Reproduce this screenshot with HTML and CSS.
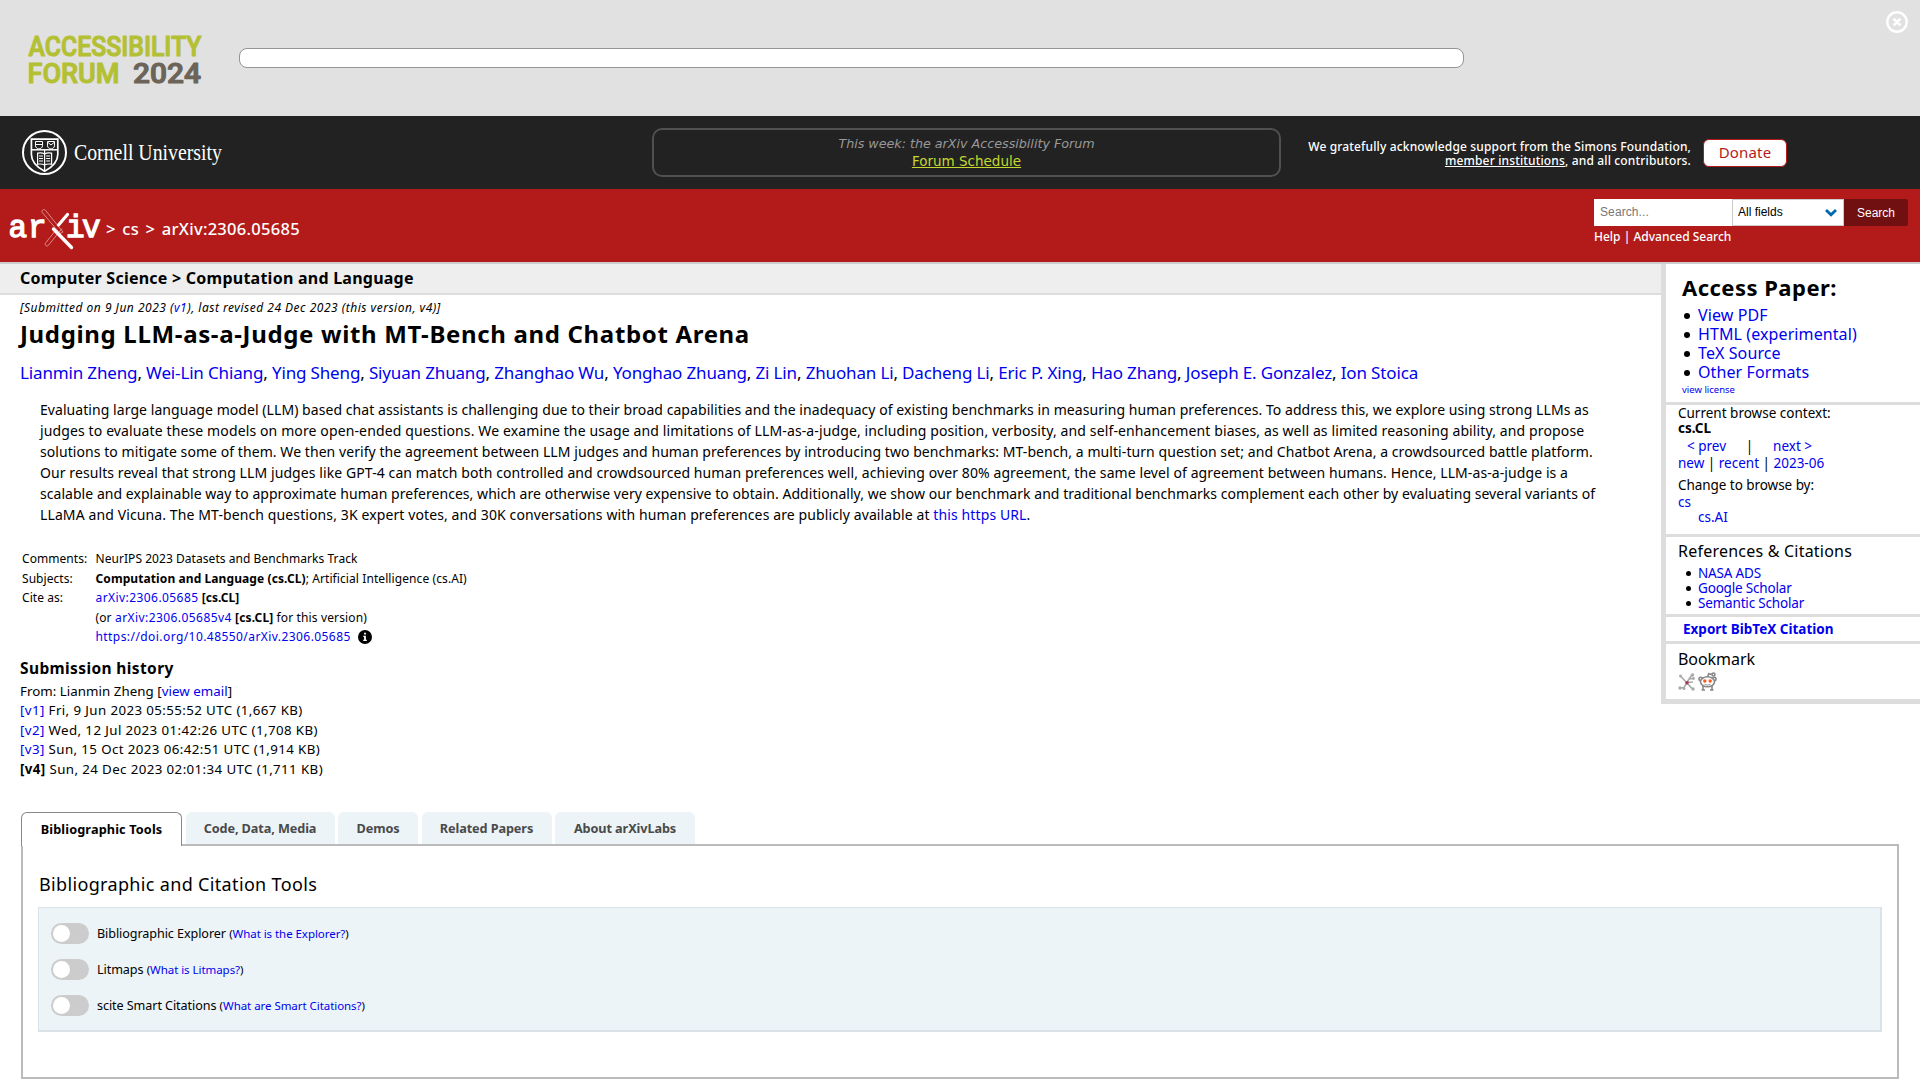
FILE: index.html
```html
<!DOCTYPE html>
<html lang="en">
<head>
<meta charset="utf-8">
<title>[2306.05685] Judging LLM-as-a-Judge with MT-Bench and Chatbot Arena</title>
<link rel="stylesheet" href="styles.css">
</head>
<body>
<div class="banner">
  <svg class="forum-logo" width="180" height="64" viewBox="0 0 180 64" role="img">
    <g class="forum-type">
      <text x="1.500" y="25.500" textLength="173" lengthAdjust="spacingAndGlyphs">ACCESSIBILITY</text>
      <text x="0.500" y="52.500" textLength="92" lengthAdjust="spacingAndGlyphs">FORUM</text>
      <text class="year" x="106" y="52.500" textLength="68" lengthAdjust="spacingAndGlyphs">2024</text>
    </g>
  </svg>
  <div class="banner-bar"></div>
  <svg class="close" width="24" height="24" viewBox="0 0 24 24">
    <circle cx="12" cy="12" r="9.7" fill="none" stroke="#fff" stroke-width="2.4"/>
    <path d="M9.4 9.4l5.2 5.2M14.6 9.4l-5.2 5.2" stroke="#fff" stroke-width="2.8" stroke-linecap="round"/>
  </svg>
</div>

<header class="cornell">
  <div class="cornell-logo">
    <svg width="206" height="48" viewBox="0 0 206 48">
      <g fill="none" stroke="#fff">
        <circle cx="22.5" cy="24.5" r="21.5" stroke-width="2"/>
        <path d="M9.4 11.2h26.4v15.3c0 8-5.6 12.700-13.200 16.800C15 39.200 9.400 34.500 9.400 26.500z" stroke-width="1.7"/>
        <path d="M9.400 21.800h26.400" stroke-width="1.5"/>
        <path d="M13.500 13.500h7v4.300c0 1.800-1.800 2.800-3.500 3.200-1.700-.4-3.500-1.400-3.500-3.200zM25.500 13.500h7v4.300c0 1.800-1.800 2.800-3.500 3.200-1.700-.4-3.500-1.400-3.500-3.200zM13.500 16.500h7M26 14.500l3 2.500 3-2.500" stroke-width="1"/>
        <path d="M22.600 26c-2-1.300-4.500-1.300-7-.8v11c2.500-.4 5-.3 7 .8 2-1.100 4.500-1.200 7-.8v-11c-2.500-.5-5-.5-7 .8zM22.600 22v21" stroke-width="1.200"/>
        <path d="M17 28h4M17 30.500h4M17 33h4M24.200 28h4M24.200 30.500h4M24.200 33h4" stroke-width="1"/>
      </g>
      <text class="cornell-name" x="52" y="32" textLength="148" lengthAdjust="spacingAndGlyphs">Cornell University</text>
    </svg>
  </div>
  <div class="forum-box">
    <em>This week: the arXiv Accessibility Forum</em>
    <a>Forum Schedule</a>
  </div>
  <div class="support">We gratefully acknowledge support from the Simons Foundation,<br><a>member institutions</a>, and all contributors.</div>
  <a class="donate">Donate</a>
</header>

<div class="titlebar">
  <svg class="arxiv-logo" width="94" height="42" viewBox="0 0 94 42">
    <g class="arxiv-type"><text x="-.5" y="29">a</text><text x="19" y="29">r</text><text x="57" y="29">i</text><text x="73" y="29">v</text></g>
    <path d="M33.500 2.200c1-1 2.300-.7 3 .2L54 24l-3 1.500L33.300 4.500c-.6-.8-.4-1.700.2-2.300z" fill="#b31b1b" stroke="#e4a5a5" stroke-width=".8"/>
    <path d="M53 20.500L39.500 37.200c-.9 1-2.100.9-2.800.2-.8-.7-.7-1.800 0-2.600L47 22" fill="none" stroke="#e4a5a5" stroke-width=".8"/>
    <path d="M49.500 17L58.500 6.500" stroke="#fff" stroke-width="3.200" stroke-linecap="round"/>
    <path d="M44.500 21L62.500 39.500" stroke="#fff" stroke-width="3.400" stroke-linecap="round"/>
  </svg>
  <div class="crumbs">&gt; cs &gt; arXiv:2306.05685</div>
  <div class="search">
    <div class="search-row">
      <div class="field">Search...</div>
      <div class="select">All fields
        <svg width="14" height="9" viewBox="0 0 14 9"><path d="M2 2l5 4.800L12 2" fill="none" stroke="#0068ac" stroke-width="2.800"/></svg>
      </div>
      <div class="search-btn">Search</div>
    </div>
    <div class="search-help">Help | Advanced Search</div>
  </div>
</div>

<main class="main">
  <div class="paper">
    <div class="subject">Computer Science &gt; Computation and Language</div>
    <div class="dateline">[Submitted on 9 Jun 2023 (<a>v1</a>), last revised 24 Dec 2023 (this version, v4)]</div>
    <h1>Judging LLM-as-a-Judge with MT-Bench and Chatbot Arena</h1>
    <div class="authors"><a>Lianmin Zheng</a>, <a>Wei-Lin Chiang</a>, <a>Ying Sheng</a>, <a>Siyuan Zhuang</a>, <a>Zhanghao Wu</a>, <a>Yonghao Zhuang</a>, <a>Zi Lin</a>, <a>Zhuohan Li</a>, <a>Dacheng Li</a>, <a>Eric P. Xing</a>, <a>Hao Zhang</a>, <a>Joseph E. Gonzalez</a>, <a>Ion Stoica</a></div>
    <div class="abstract">
      <span class="l1">Evaluating large language model (LLM) based chat assistants is challenging due to their broad capabilities and the inadequacy of existing benchmarks in measuring human preferences. To address this, we explore using strong LLMs as</span>
      <span class="l2">judges to evaluate these models on more open-ended questions. We examine the usage and limitations of LLM-as-a-judge, including position, verbosity, and self-enhancement biases, as well as limited reasoning ability, and propose</span>
      <span class="l3">solutions to mitigate some of them. We then verify the agreement between LLM judges and human preferences by introducing two benchmarks: MT-bench, a multi-turn question set; and Chatbot Arena, a crowdsourced battle platform.</span>
      <span class="l4">Our results reveal that strong LLM judges like GPT-4 can match both controlled and crowdsourced human preferences well, achieving over 80% agreement, the same level of agreement between humans. Hence, LLM-as-a-judge is a</span>
      <span class="l5">scalable and explainable way to approximate human preferences, which are otherwise very expensive to obtain. Additionally, we show our benchmark and traditional benchmarks complement each other by evaluating several variants of</span>
      <span class="l6">LLaMA and Vicuna. The MT-bench questions, 3K expert votes, and 30K conversations with human preferences are publicly available at <a>this https URL</a>.</span>
    </div>
    <div class="meta">
      <span>Comments:</span><span>NeurIPS 2023 Datasets and Benchmarks Track</span>
      <span>Subjects:</span><span class="subjects"><b>Computation and Language (cs.CL)</b>; Artificial Intelligence (cs.AI)</span>
      <span>Cite as:</span><span><a class="wide">arXiv:2306.05685</a> <b>[cs.CL]</b></span>
      <span></span><span class="version">(or <a class="wide">arXiv:2306.05685v4</a> <b>[cs.CL]</b> for this version)</span>
      <span></span><span class="doi"><a>https://doi.org/10.48550/arXiv.2306.05685</a>
        <svg width="14" height="14" viewBox="0 0 14 14"><circle cx="7" cy="7" r="7"/><path d="M5.300 5.800h2.600v4h.9v1.300H5.200V9.800h.9V7.100h-.8zM6.100 2.700h1.800v1.900H6.100z" fill="#fff"/></svg></span>
    </div>
    <h2>Submission history</h2>
    <div class="history">
      <div class="from">From: Lianmin Zheng [<a>view email</a>]</div>
      <div><a>[v1]</a> Fri, 9 Jun 2023 05:55:52 UTC (1,667 KB)</div>
      <div><a>[v2]</a> Wed, 12 Jul 2023 01:42:26 UTC (1,708 KB)</div>
      <div><a>[v3]</a> Sun, 15 Oct 2023 06:42:51 UTC (1,914 KB)</div>
      <div><b>[v4]</b> Sun, 24 Dec 2023 02:01:34 UTC (1,711 KB)</div>
    </div>
  </div>

  <aside class="side">
    <section class="access">
      <h2>Access Paper:</h2>
      <ul>
        <li><a>View PDF</a></li>
        <li><a>HTML (experimental)</a></li>
        <li><a>TeX Source</a></li>
        <li><a>Other Formats</a></li>
      </ul>
      <a class="license">view license</a>
    </section>
    <section class="browse">
      <div>Current browse context:</div>
      <div><b>cs.CL</b></div>
      <div class="prevnext"><a>&lt; prev</a><span>|</span><a>next &gt;</a></div>
      <div class="tall"><a>new</a> | <a>recent</a> | <a>2023-06</a></div>
      <div class="change">Change to browse by:</div>
      <div class="cs"><a>cs</a></div>
      <div class="sub"><a>cs.AI</a></div>
    </section>
    <section class="refs">
      <h3>References &amp; Citations</h3>
      <ul>
        <li><a>NASA ADS</a></li>
        <li><a>Google Scholar</a></li>
        <li><a>Semantic Scholar</a></li>
      </ul>
    </section>
    <section class="export"><a>Export BibTeX Citation</a></section>
    <section class="bookmark">
      <h3>Bookmark</h3>
      <div class="icons">
        <svg width="18" height="18" viewBox="0 0 18 18"><path d="M2.500 3L14 15.500M1.500 15L6 14.500 11 6l4.500-.5M11 6l3-4M8 9.500L15 9" fill="none" stroke="#aaa" stroke-width="1.700"/><g fill="#aaa"><circle cx="2.500" cy="3" r="1.500"/><circle cx="14.500" cy="2" r="1.800"/><circle cx="15.500" cy="5.500" r="1.400"/><circle cx="2" cy="15" r="1.700"/><circle cx="6" cy="15.500" r="1.500"/><circle cx="15" cy="16" r="1.700"/></g><circle cx="9" cy="9.800" r="1.700" fill="#a33a50"/></svg>
        <svg width="19" height="19" viewBox="0 0 19 19"><g fill="#fff" stroke="#888" stroke-width="1.600"><path d="M5 12v5.500M14 12v5.500M3.500 18h3.500M12 18h3.500M9.500 5l1.200-3.300 3.800.8" fill="none"/><circle cx="15.500" cy="2.500" r="1.500"/><circle cx="2.700" cy="7" r="1.700"/><circle cx="16.300" cy="7" r="1.700"/><ellipse cx="9.500" cy="9.800" rx="7" ry="5"/></g><circle cx="6.800" cy="9" r="1.700" fill="#ff5722"/><circle cx="12.200" cy="9" r="1.700" fill="#ff5722"/><path d="M6.500 12.300q3 1.800 6 0" fill="none" stroke="#999"/></svg>
      </div>
    </section>
  </aside>
</main>

<div class="tabs">
  <div class="tab active">Bibliographic Tools</div>
  <div class="tab t2">Code, Data, Media</div>
  <div class="tab t3">Demos</div>
  <div class="tab t4">Related Papers</div>
  <div class="tab t5">About arXivLabs</div>
</div>
<div class="panel">
  <h2>Bibliographic and Citation Tools</h2>
  <div class="tools">
    <div class="tool"><i class="switch"></i><span>Bibliographic Explorer <small>(<a>What is the Explorer?</a>)</small></span></div>
    <div class="tool"><i class="switch"></i><span>Litmaps <small>(<a>What is Litmaps?</a>)</small></span></div>
    <div class="tool"><i class="switch"></i><span>scite Smart Citations <small>(<a>What are Smart Citations?</a>)</small></span></div>
  </div>
</div>
</body>
</html>
```
FILE: styles.css
```css
* { box-sizing: border-box; }
body { margin: 0; width: 1920px; height: 1080px; overflow: hidden; background: #fff; color: #000; font-family: "Noto Sans", "Open Sans", sans-serif; white-space: nowrap; }
h1, h2, h3, ul { margin: 0; padding: 0; }
a { color: #00e; }
svg { display: block; flex: none; overflow: visible; }

.banner { display: flex; align-items: flex-start; height: 116px; background: #e1e1e1; }
.forum-logo { margin: 30px 0 0 27px; }
.forum-type { font: 500 28px "Roboto", sans-serif; fill: #b4c034; stroke: #b4c034; stroke-width: 1.1; stroke-linejoin: round; }
.forum-type .year { fill: #6c6458; stroke: #6c6458; }
.banner-bar { width: 1225px; height: 20px; margin: 48px 0 0 32px; background: #fff; border: 1px solid #949494; border-radius: 8px; }
.close { margin: 10px 11px 0 auto; }

.cornell { display: grid; grid-template-columns: 652px 629px 410px 96px; height: 73px; background: #222; color: #fff; }
.cornell-logo { padding: 12px 0 0 22px; }
.cornell-name { font: 23px "Liberation Serif", serif; fill: #fff; }
.forum-box { height: 49px; margin-top: 12px; border: 2px solid #505050; border-radius: 10px; text-align: center; font: 13.500px/17.500px "DejaVu Sans", sans-serif; padding-top: 5px; }
.forum-box em { display: block; font-size: 12.700px; color: #999; }
.forum-box a { color: #c4d82e; text-decoration: underline; text-underline-offset: 1px; }
.support { padding-top: 23.500px; text-align: right; font-size: 12px; line-height: 14px; letter-spacing: .15px; font-weight: 500; }
.support a { color: #fff; text-decoration: underline; }
.donate { height: 28px; margin: 23px 0 0 12px; width: 84px; border: 1px solid #b31b1b; border-radius: 6px; background: #fff; color: #b31b1b; text-align: center; font-size: 15px; line-height: 24px; letter-spacing: .15px; }

.titlebar { display: flex; height: 75px; background: #b31b1b; border-bottom: 2px solid #ccc; color: #fff; }
.arxiv-logo { margin: 19px 0 0 9px; }
.arxiv-type { font: 31px "Liberation Mono", monospace; fill: #fff; stroke: #fff; stroke-width: 1.3; }
.crumbs { margin-left: 3px; padding-top: 27px; font-size: 16.500px; font-weight: 500; line-height: 26px; letter-spacing: .280px; word-spacing: 2px; }
.search { margin: 10px 12px 0 auto; width: 314px; }
.search-row { display: flex; height: 27px; font: 12px/27px "Liberation Sans", sans-serif; }
.field { width: 138px; background: #fff; color: #777; padding-left: 6px; letter-spacing: .1px; }
.select { display: flex; align-items: center; justify-content: space-between; width: 112px; background: #fff; color: #000; border: 1px solid #ccc; padding: 0 5px; }
.search-btn { flex: 1; background: #701010; text-align: center; border-radius: 0 2px 2px 0; line-height: 29px; }
.search-help { font-size: 12px; line-height: 18px; font-weight: 500; padding-top: 2px; }

.main { display: flex; align-items: flex-start; height: 548px; }
.paper { width: 1661px; }
.subject { height: 31px; padding-left: 20px; background: #eee; border-bottom: 2px solid #ddd; font-size: 16px; font-weight: 700; line-height: 28px; letter-spacing: .240px; }
.dateline { height: 24px; padding-left: 20px; font-size: 12px; font-style: italic; line-height: 26px; letter-spacing: .500px; }
h1 { padding-left: 20px; font-size: 24px; line-height: 30px; letter-spacing: .660px; }
.authors { margin-top: 12px; padding-left: 20px; font-size: 17px; line-height: 24px; letter-spacing: -.150px; }
.abstract { margin-top: 14px; padding-left: 40px; font-size: 14px; line-height: 21px; }
.abstract span { display: block; }
.l1 { letter-spacing: .061px; }
.l2 { letter-spacing: .124px; }
.l3 { letter-spacing: .066px; }
.l4 { letter-spacing: .088px; }
.l5 { letter-spacing: .043px; }
.l6 { letter-spacing: .110px; }
.meta { display: grid; grid-template-columns: 73.500px auto; grid-auto-rows: 19.500px; margin-top: 24px; padding-left: 22px; font-size: 12px; line-height: 19.500px; letter-spacing: .05px; }
.meta .subjects { letter-spacing: .090px; }
.meta .version { letter-spacing: .130px; }
.meta .wide, .doi { letter-spacing: .430px; }
.doi { display: flex; align-items: center; gap: 7px; }
.paper h2 { margin-top: 11px; padding-left: 20px; font-size: 15.500px; line-height: 20px; letter-spacing: .380px; }
.history { margin-top: 4px; padding-left: 20px; font-size: 13.300px; line-height: 19.500px; letter-spacing: .400px; }
.from { letter-spacing: .04px; }

.side { width: 259px; border-left: 5px solid #ddd; border-bottom: 5px solid #ddd; font-size: 13.500px; line-height: 15px; }
.side section { padding-left: 12px; border-bottom: 3px solid #ddd; }
.side section:last-child { border-bottom: 0; }
.side ul { list-style: none; }
.side li::before { content: ""; display: inline-block; width: 6px; height: 6px; border-radius: 50%; background: #000; }
.side .access { height: 141px; padding: 10px 0 0 16px; }
.access h2 { font-size: 22px; line-height: 26px; letter-spacing: .480px; }
.access ul { margin-top: 6px; font-size: 16px; line-height: 19.100px; letter-spacing: .1px; }
.access li::before { margin: 0 8px 2px 2px; }
.license { display: block; font-size: 9.500px; line-height: 15px; }
.side .browse { height: 131.500px; padding-top: 1px; }
.prevnext { display: flex; padding: 2px 0 0 9px; line-height: 17px; }
.prevnext span { width: 47px; text-align: center; }
.tall { line-height: 17px; }
.change { padding-top: 5px; line-height: 17px; letter-spacing: -.05px; }
.cs { line-height: 17px; }
.sub { padding-left: 20px; line-height: 13px; }
.refs { height: 80.500px; padding-top: 4px; }
.side h3 { font-size: 16px; font-weight: 400; line-height: 20px; letter-spacing: .220px; }
.refs ul { margin-top: 5.500px; letter-spacing: -.180px; }
.refs li::before { width: 5px; height: 5px; margin: 0 7px 2px 8px; }
.side .export { height: 27px; padding-left: 17px; font-weight: 700; line-height: 25px; }
.bookmark { height: 55px; padding-top: 5px; }
.side .bookmark h3 { letter-spacing: -.05px; }
.icons { display: flex; gap: 2px; align-items: center; margin-top: 3px; }

.tabs { display: flex; gap: 3.500px; height: 32px; padding-left: 21px; position: relative; z-index: 1; }
.tab { height: 32px; background: #ecf4f8; color: #4a4a4a; border-radius: 6px 6px 0 0; text-align: center; font-size: 12.700px; font-weight: 700; line-height: 32px; letter-spacing: -.1px; }
.tab.active { width: 161px; height: 34px; background: #fff; color: #000; border: 1px solid #888; border-bottom: 0; letter-spacing: .130px; }
.t2 { width: 149px; }
.t3 { width: 80px; }
.t4 { width: 130px; }
.t5 { width: 140px; }
.panel { width: 1878px; height: 235px; margin-left: 21px; border: 2px solid #bbb; padding: 25px 15px 0; }
.panel h2 { padding-left: 1px; font-size: 18px; font-weight: 400; line-height: 26px; letter-spacing: .340px; }
.tools { height: 125px; margin-top: 10px; padding: 7px 12px 0 12px; background: #ecf4f8; border: 1px solid #dbe3e8; border-width: 1px 2px 2px 1px; }
.tool { display: flex; align-items: center; gap: 8px; height: 36px; font-size: 12.600px; letter-spacing: -.080px; }
.tool small { font-size: 11.500px; letter-spacing: -.050px; }
.switch { width: 38px; height: 21px; border-radius: 11px; background: #ccc; padding: 2px; }
.switch::before { content: ""; display: block; width: 17px; height: 17px; border-radius: 50%; background: #fff; }
```
